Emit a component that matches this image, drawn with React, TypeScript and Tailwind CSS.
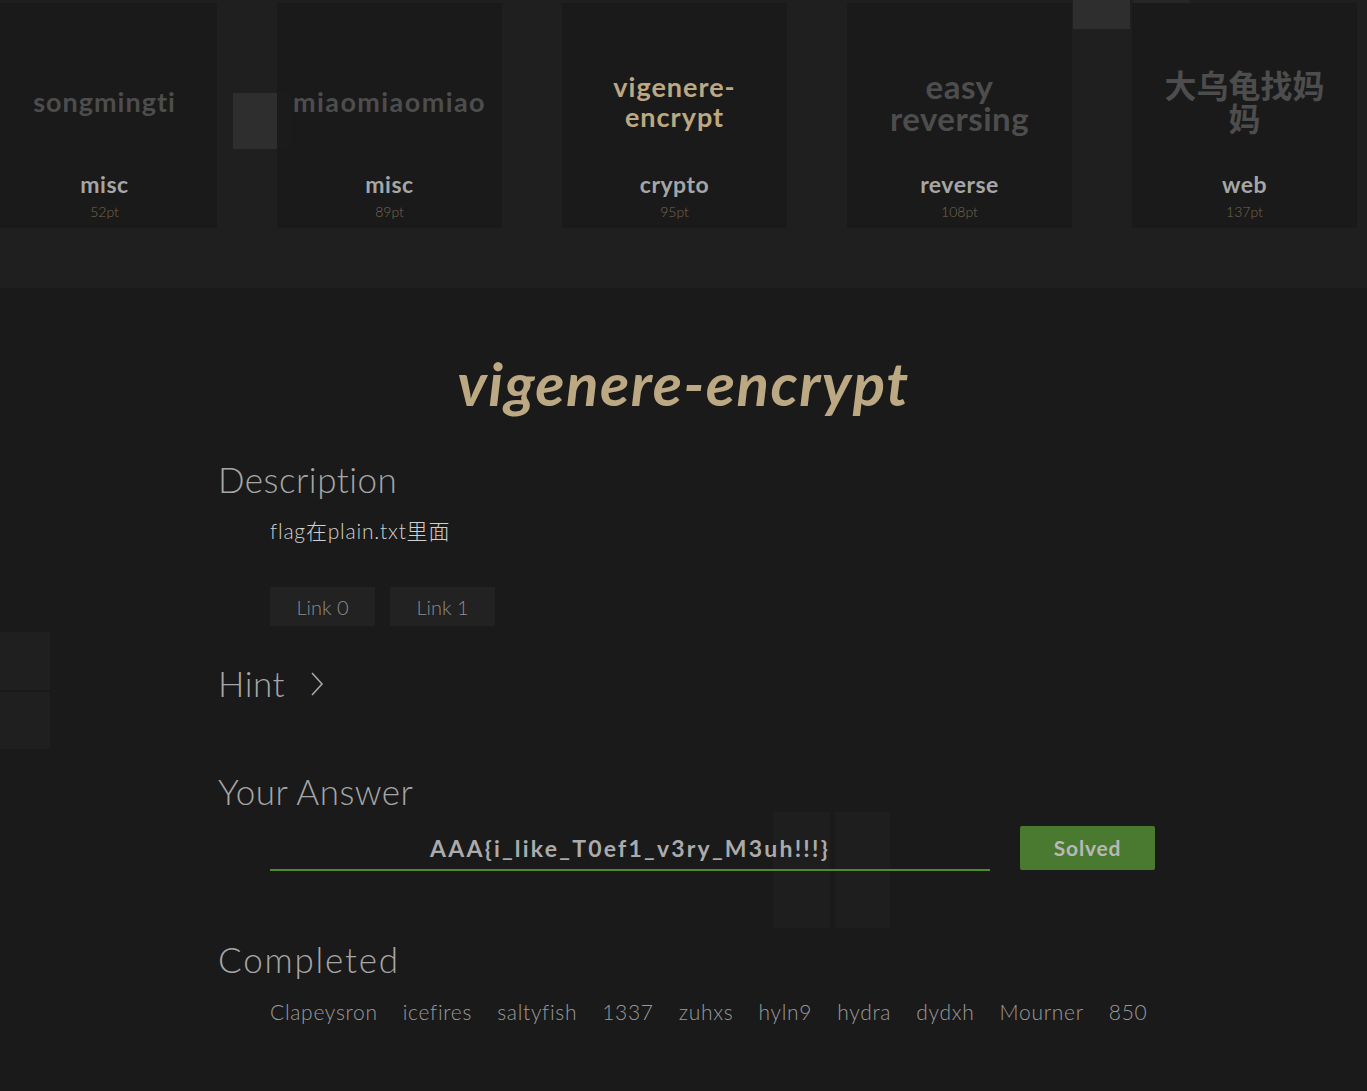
import React from "react";

const F = { fontFamily: '"Lato", "Noto Sans CJK SC", sans-serif' };

type Card = { title: string; cat: string; pts: string; active?: boolean; size: string };

const cards: Card[] = [
  { title: "songmingti", cat: "misc", pts: "52pt", size: "text-[27px] leading-[30px] tracking-[1px]" },
  { title: "miaomiaomiao", cat: "misc", pts: "89pt", size: "text-[27px] leading-[30px] tracking-[1.4px]" },
  { title: "vigenere-\nencrypt", cat: "crypto", pts: "95pt", active: true, size: "text-[27px] leading-[30px] tracking-[1px]" },
  { title: "easy\nreversing", cat: "reverse", pts: "108pt", size: "text-[33px] leading-[32px] tracking-[0.5px]" },
  { title: "大乌龟找妈\n妈", cat: "web", pts: "137pt", size: "text-[32px] leading-[33px]" },
];

const names = ["Clapeysron", "icefires", "saltyfish", "1337", "zuhxs", "hyln9", "hydra", "dydxh", "Mourner", "850"];

function Square({ cls }: { cls: string }) {
  return <div className={`absolute ${cls}`} />;
}

export default function App() {
  return (
    <div className="min-h-[1091px] w-full bg-[#1a1a1a] overflow-hidden relative" style={F}>
      {/* top strip */}
      <div className="relative h-[288px] bg-[#1f1f1f] overflow-hidden">
        {/* decorative background squares */}
        <Square cls="left-[233px] top-[93px] w-[57px] h-[56px] bg-[#2e2e2e]" />
        <Square cls="left-[293px] top-[33px] w-[57px] h-[56px] bg-[#222222]" />
        <Square cls="left-[293px] top-[153px] w-[57px] h-[56px] bg-[#222222]" />
        <Square cls="left-[353px] top-[93px] w-[58px] h-[56px] bg-[#222222]" />
        <Square cls="left-[353px] top-[153px] w-[58px] h-[56px] bg-[#222222]" />
        <Square cls="left-[1073px] top-0 w-[57px] h-[29px] bg-[#2e2e2e]" />
        <Square cls="left-[1133px] top-0 w-[57px] h-[29px] bg-[#262626]" />
        <div className="relative flex gap-[60px] ml-[-8px] pt-[3px]">
          {cards.map((c) => (
            <div key={c.pts} className="w-[225px] h-[225px] shrink-0 bg-[#191919]/90 flex flex-col items-center">
              <div className="h-[170px] pt-[28px] flex items-center justify-center">
                <div
                  className={`whitespace-pre-line text-center font-bold ${c.size} ${
                    c.active ? "text-[#bca882]" : "text-[#4d4d4d]"
                  }`}
                >
                  {c.title}
                </div>
              </div>
              <div className="text-[23px] leading-[22px] font-bold tracking-[0.5px] text-[#a6a6a6]">{c.cat}</div>
              <div className="mt-[9px] text-[14px] leading-[16px] font-light text-[#75684f]">{c.pts}</div>
            </div>
          ))}
        </div>
      </div>

      {/* main decorative squares */}
      <Square cls="left-0 top-[632px] w-[50px] h-[58px] bg-[#1f1f1f]" />
      <Square cls="left-0 top-[692px] w-[50px] h-[57px] bg-[#1f1f1f]" />
      <Square cls="left-[773px] top-[812px] w-[57px] h-[116px] bg-[#1e1e1e]" />
      <Square cls="left-[835px] top-[812px] w-[55px] h-[116px] bg-[#1e1e1e]" />

      {/* main */}
      <div className="relative pt-[63px]">
        <h1 className="text-center italic font-bold text-[60px] leading-[64px] tracking-[1.5px] text-[#bca882]">
          vigenere-encrypt
        </h1>
        <div className="ml-[218px] w-[960px]">
          <h2 className="mt-[44px] text-[35px] leading-[40px] font-light tracking-[0.5px] text-[#a6a6a6]">Description</h2>
          <div className="ml-[52px]">
            <p className="mt-[18px] text-[21px] leading-[28px] font-light tracking-[0.8px] text-[#d0d0d0]">
              flag在plain.txt里面
            </p>
            <div className="mt-[42px] flex gap-[15px]">
              <div className="w-[105px] h-[39px] bg-[#222222] flex items-center justify-center text-[20px] font-light text-[#8c8c8c]">
                Link 0
              </div>
              <div className="w-[105px] h-[39px] bg-[#222222] flex items-center justify-center text-[20px] font-light text-[#8c8c8c]">
                Link 1
              </div>
            </div>
          </div>
          <div className="mt-[37px] flex items-center gap-[24px]">
            <h2 className="text-[35px] leading-[40px] font-light tracking-[0.5px] text-[#a6a6a6]">Hint</h2>
            <svg width="16" height="26" viewBox="0 0 16 26" className="mt-[2px]">
              <polyline points="3,2 13,13 3,24" fill="none" stroke="#a6a6a6" strokeWidth="1.6" />
            </svg>
          </div>
          <h2 className="mt-[68px] text-[35px] leading-[40px] font-light tracking-[0.5px] text-[#a6a6a6]">Your Answer</h2>
          <div className="mt-[15px] ml-[52px] flex items-start gap-[30px]">
            <div className="w-[720px] shrink-0 h-[45px] border-b-2 border-[#4e8a2e] flex items-center justify-center text-[23px] font-bold tracking-[2.2px] text-[#ababab] pt-[2px]">
              AAA{"{"}i_like_T0ef1_v3ry_M3uh!!!{"}"}
            </div>
            <div className="w-[135px] shrink-0 h-[44px] bg-[#4a7a2f] rounded-[2px] flex items-center justify-center text-[21px] font-bold tracking-[0.8px] text-[#b8b8b8]">
              Solved
            </div>
          </div>
          <h2 className="mt-[68px] text-[35px] leading-[40px] font-light tracking-[1.8px] text-[#a6a6a6]">Completed</h2>
          <div className="mt-[19px] ml-[52px] flex gap-[25px] text-[21px] leading-[28px] font-light tracking-[0.7px] text-[#9a9a9a]">
            {names.map((n) => (
              <span key={n}>{n}</span>
            ))}
          </div>
        </div>
      </div>
    </div>
  );
}
